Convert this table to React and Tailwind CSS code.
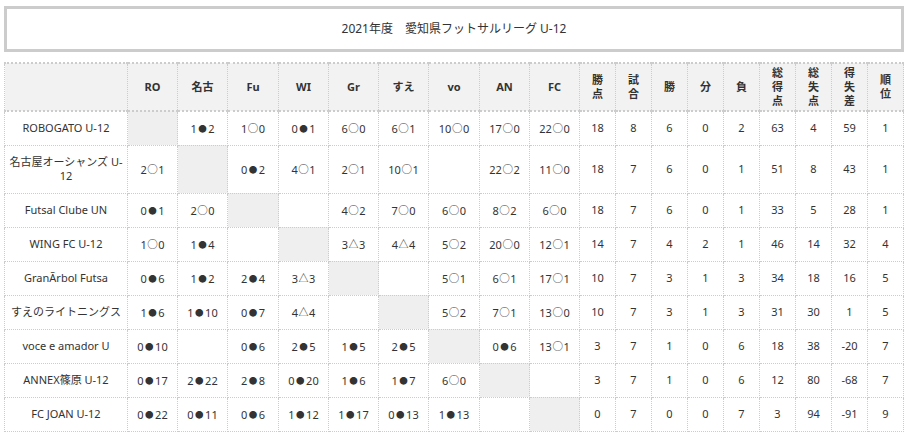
import React from "react";

const cols = ["RO", "名古", "Fu", "WI", "Gr", "すえ", "vo", "AN", "FC"];
const stats = [["勝", "点"], ["試", "合"], ["勝"], ["分"], ["負"], ["総", "得", "点"], ["総", "失", "点"], ["得", "失", "差"], ["順", "位"]];

const rows = [
  { name: "ROBOGATO U-12", r: ["X", "1●2", "1○0", "0●1", "6○0", "6○1", "10○0", "17○0", "22○0"], s: [18, 8, 6, 0, 2, 63, 4, 59, 1] },
  { name: ["名古屋オーシャンズ U-", "12"], tall: true, r: ["2○1", "X", "0●2", "4○1", "2○1", "10○1", "", "22○2", "11○0"], s: [18, 7, 6, 0, 1, 51, 8, 43, 1] },
  { name: "Futsal Clube UN", r: ["0●1", "2○0", "X", "", "4○2", "7○0", "6○0", "8○2", "6○0"], s: [18, 7, 6, 0, 1, 33, 5, 28, 1] },
  { name: "WING FC U-12", r: ["1○0", "1●4", "", "X", "3△3", "4△4", "5○2", "20○0", "12○1"], s: [14, 7, 4, 2, 1, 46, 14, 32, 4] },
  { name: "GranÃrbol Futsa", r: ["0●6", "1●2", "2●4", "3△3", "X", "", "5○1", "6○1", "17○1"], s: [10, 7, 3, 1, 3, 34, 18, 16, 5] },
  { name: "すえのライトニングス", r: ["1●6", "1●10", "0●7", "4△4", "", "X", "5○2", "7○1", "13○0"], s: [10, 7, 3, 1, 3, 31, 30, 1, 5] },
  { name: "voce e amador U", r: ["0●10", "", "0●6", "2●5", "1●5", "2●5", "X", "0●6", "13○1"], s: [3, 7, 1, 0, 6, 18, 38, -20, 7] },
  { name: "ANNEX篠原 U-12", r: ["0●17", "2●22", "2●8", "0●20", "1●6", "1●7", "6○0", "X", ""], s: [3, 7, 1, 0, 6, 12, 80, -68, 7] },
  { name: "FC JOAN U-12", r: ["0●22", "0●11", "0●6", "1●12", "1●17", "0●13", "1●13", "", "X"], s: [0, 7, 0, 0, 7, 3, 94, -91, 9] },
];

const widths = [123, 50, 50, 51, 50, 50, 50, 51, 50, 50, 36, 36, 36, 36, 36, 36, 36, 36, 36];

function Score({ v }) {
  const m = v.match(/^(\d+)([●○△])(\d+)$/);
  if (!m) return v;
  const sym = m[2];
  const cls =
    sym === "●"
      ? "text-[8.5px] mx-[1.5px]"
      : sym === "○"
      ? "text-[10.5px] mx-[0.5px]"
      : "text-[10px] mx-[0.5px]";
  return (
    <>
      {m[1]}
      <span className={`${cls} font-['Noto_Sans_CJK_JP',sans-serif] align-[1px]`}>{sym}</span>
      {m[3]}
    </>
  );
}

export default function App() {
  return (
    <div className="bg-white text-[#333] font-['Noto_Sans','Noto_Sans_CJK_JP',sans-serif] pt-[6px] pl-[4px] w-[910px] h-[439px] overflow-hidden">
      <div className="w-[900px] h-[46px] border-[3px] border-[#cccccc] flex items-center justify-center text-[12px]">
        2021年度　愛知県フットサルリーグ U-12
      </div>
      <table className="mt-[10px] table-fixed border-collapse w-[899px] text-[11px] leading-[14px]">
        <colgroup>
          {widths.map((w, i) => (
            <col key={i} style={{ width: w }} />
          ))}
        </colgroup>
        <thead>
          <tr className="bg-[#f2f2f2]">
            <th className="h-[48px] border border-dotted border-[#cccccc] border-t-2 border-t-solid border-t-[#cccccc] border-b-2 border-b-solid border-b-[#cccccc]"></th>
            {cols.map((c) => (
              <th key={c} className="h-[48px] p-0 font-bold text-center border border-dotted border-[#cccccc] border-t-2 border-t-solid border-t-[#cccccc] border-b-2 border-b-solid border-b-[#cccccc]">
                {c}
              </th>
            ))}
            {stats.map((s, i) => (
              <th key={i} className="h-[48px] p-0 font-bold text-center leading-[14px] border border-dotted border-[#cccccc] border-t-2 border-t-solid border-t-[#cccccc] border-b-2 border-b-solid border-b-[#cccccc]">
                {s.map((ch, j) => (
                  <div key={j}>{ch}</div>
                ))}
              </th>
            ))}
          </tr>
        </thead>
        <tbody>
          {rows.map((row, ri) => (
            <tr key={ri}>
              <td className={`${row.tall ? "h-[48px]" : "h-[34px]"} p-0 text-center whitespace-nowrap border border-dotted border-[#cccccc]`}>
                {Array.isArray(row.name) ? (
                  <>
                    {row.name[0]}
                    <br />
                    {row.name[1]}
                  </>
                ) : (
                  row.name
                )}
              </td>
              {row.r.map((v, ci) => (
                <td
                  key={ci}
                  className={`p-0 text-center whitespace-nowrap border border-dotted border-[#cccccc] ${v === "X" ? "bg-[#efefef]" : ""}`}
                >
                  {v === "X" ? "" : <Score v={v} />}
                </td>
              ))}
              {row.s.map((v, ci) => (
                <td key={ci} className="p-0 text-center border border-dotted border-[#cccccc]">
                  {v}
                </td>
              ))}
            </tr>
          ))}
        </tbody>
      </table>
    </div>
  );
}
